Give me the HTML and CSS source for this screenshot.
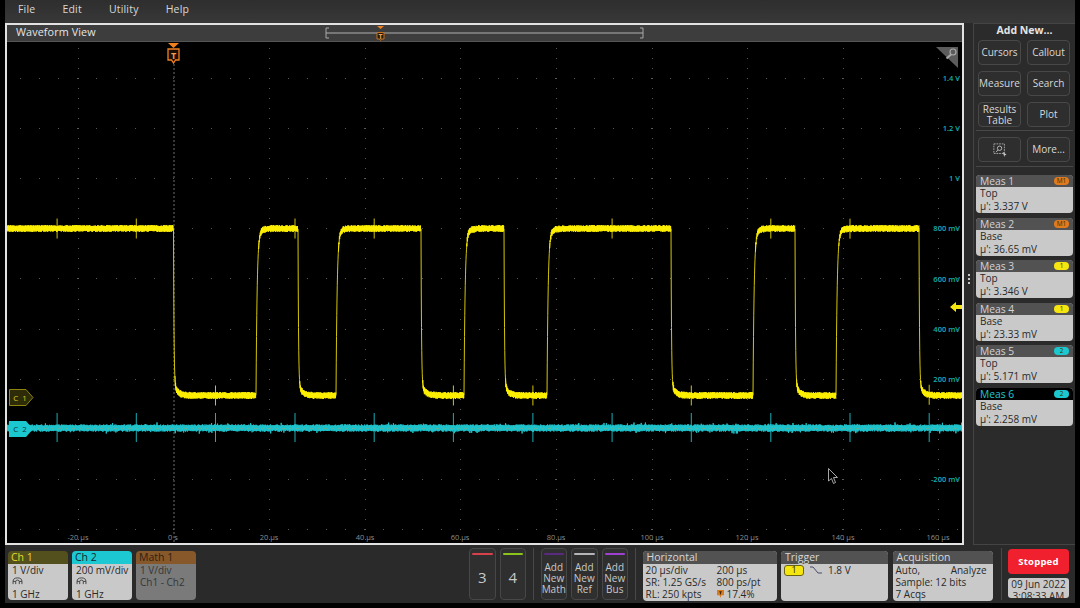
FILE: index.html
```html
<!DOCTYPE html>
<html lang="en">
<head>
<meta charset="utf-8">
<title>Waveform View</title>
<link rel="stylesheet" href="styles.css">
</head>
<body>
<div class="app">
  <nav class="menu"><span>File</span><span>Edit</span><span>Utility</span><span>Help</span></nav>
  <div class="main">
    <section class="view">
      <header class="view-head">
        <span class="view-title">Waveform View</span>
        <svg class="overview" viewBox="0 0 320 16">
          <path class="ov-br" d="M4 3H1V13H4M315 3H318V13H315"/>
          <path class="ov-line" d="M1 8H318"/>
          <path class="ov-tri" d="M52 1H59L55.500 4Z"/>
          <path class="ov-box" d="M52 7.500H59V14H56.500L55.500 15.500L54.500 14H52Z"/>
          <text class="ov-t" x="55.500" y="13.500">T</text>
        </svg>
      </header>
      <div class="plot">
        <svg class="plot-svg" id="plot" viewBox="7 42 955 501">
          <g id="grid"></g>
          <g class="v-labels">
            <text x="960" y="81">1.4 V</text><text x="960" y="131">1.2 V</text><text x="960" y="181">1 V</text>
            <text x="960" y="231">800 mV</text><text x="960" y="282">600 mV</text><text x="960" y="332">400 mV</text>
            <text x="960" y="382">200 mV</text><text x="960" y="482">-200 mV</text>
          </g>
          <g class="t-labels">
            <text x="78" y="540">-20 µs</text><text x="173" y="540">0 s</text><text x="269" y="540">20 µs</text>
            <text x="365" y="540">40 µs</text><text x="460" y="540">60 µs</text><text x="556" y="540">80 µs</text>
            <text x="652" y="540">100 µs</text><text x="747" y="540">120 µs</text><text x="843" y="540">140 µs</text>
            <text x="938" y="540">160 µs</text>
          </g>
          <path class="trig-line" d="M174 64V543"/>
          <path class="spike-c2" id="c2s"></path>
          <polyline class="trace-c2" id="c2"></polyline>
          <path class="c2-ref" d="M30 428.500H963"/>
          <path class="edge-c1" id="c1e"></path>
          <path class="spike-c1" id="c1s"></path>
          <path class="trace-c1" id="c1"></path>

          <path class="orange-fill" d="M168 43H179L173.500 48Z"/>
          <path class="t-box" d="M168 49H179V60H175.500L173.500 63L171.500 60H168Z"/>
          <text class="t-letter" x="173.500" y="58.500">T</text>

          <path class="c1-tag" d="M9.500 389.500H26L33 397.500L26 405.500H9.500Z"/>
          <text class="c1-text" x="20.500" y="400.500">C 1</text>
          <path class="c2-tag" d="M9 421H26L33 429L26 437H9Z"/>
          <text class="c2-text" x="20.500" y="432">C 2</text>

          <path class="level" d="M950 307L956 302V305H962V309H956V312Z"/>

          <path class="corner" d="M936 47H958V68Z"/>
          <circle class="corner-icon" cx="953" cy="52" r="3"/>
          <path class="corner-icon thick" d="M951 54.500L946.500 58.500"/>

          <path class="pointer" d="M828.500 468.500V481L831.500 478.500L833.500 483.500L835.500 482.500L833.500 477.500H837.500Z"/>
        </svg>
      </div>
    </section>
    <div class="grip"><i></i><i></i><i></i></div>
    <aside class="side">
      <div class="side-title">Add New...</div>
      <div class="side-grid">
        <button>Cursors</button><button>Callout</button>
        <button>Measure</button><button>Search</button>
        <button>Results<br>Table</button><button>Plot</button>
      </div>
      <div class="side-grid tools">
        <button aria-label="Zoom box">
          <svg class="zoom-ico" viewBox="0 0 16 16">
            <path class="zi-box" d="M1 1H13V12H1Z"/>
            <circle class="zi-s" cx="7.500" cy="6" r="2.500"/>
            <path class="zi-s" d="M5.500 8L3.500 10.500"/>
            <path class="zi-arrow" d="M11 10L15.500 13.500L13.500 14L13 16Z"/>
          </svg>
        </button>
        <button>More...</button>
      </div>
      <div class="meas-list">
        <div class="meas"><div class="meas-head"><span>Meas 1</span><b class="tag tag-m">M1</b></div><div class="meas-body">Top<br>µ': 3.337 V</div></div>
        <div class="meas"><div class="meas-head"><span>Meas 2</span><b class="tag tag-m">M1</b></div><div class="meas-body">Base<br>µ': 36.65 mV</div></div>
        <div class="meas"><div class="meas-head"><span>Meas 3</span><b class="tag tag-1">1</b></div><div class="meas-body">Top<br>µ': 3.346 V</div></div>
        <div class="meas"><div class="meas-head"><span>Meas 4</span><b class="tag tag-1">1</b></div><div class="meas-body">Base<br>µ': 23.33 mV</div></div>
        <div class="meas"><div class="meas-head"><span>Meas 5</span><b class="tag tag-2">2</b></div><div class="meas-body">Top<br>µ': 5.171 mV</div></div>
        <div class="meas active"><div class="meas-head"><span>Meas 6</span><b class="tag tag-2">2</b></div><div class="meas-body">Base<br>µ': 2.258 mV</div></div>
      </div>
    </aside>
  </div>
  <footer class="bar">
    <div class="chan ch1">
      <div class="chan-head">Ch 1</div>
      <div class="chan-body"><div>1 V/div</div>
        <svg class="probe" viewBox="0 0 12 9"><path d="M1 8V5Q1 1 6 1Q11 1 11 5V8M4 8V5Q4 3.500 6 3.500Q8 3.500 8 5V8M1 5H4M8 5H11"/></svg>
        <div class="chan-last">1 GHz</div></div>
    </div>
    <div class="chan ch2">
      <div class="chan-head">Ch 2</div>
      <div class="chan-body"><div>200 mV/div</div>
        <svg class="probe" viewBox="0 0 12 9"><path d="M1 8V5Q1 1 6 1Q11 1 11 5V8M4 8V5Q4 3.500 6 3.500Q8 3.500 8 5V8M1 5H4M8 5H11"/></svg>
        <div class="chan-last">1 GHz</div></div>
    </div>
    <div class="chan math">
      <div class="chan-head">Math 1</div>
      <div class="chan-body">1 V/div<br>Ch1 - Ch2</div>
    </div>

    <div class="slots">
      <button class="slot big s-red">3</button>
      <button class="slot big s-green">4</button>
      <span class="sep"></span>
      <button class="slot s-purple">Add<br>New<br>Math</button>
      <button class="slot s-grey">Add<br>New<br>Ref</button>
      <button class="slot s-violet">Add<br>New<br>Bus</button>
      <span class="sep"></span>
    </div>

    <div class="panel horizontal">
      <div class="panel-head">Horizontal</div>
      <div class="panel-body two">
        <span>20 µs/div</span><span>200 µs</span>
        <span>SR: 1.25 GS/s</span><span>800 ps/pt</span>
        <span>RL: 250 kpts</span><span class="pos"><svg class="mini-t" viewBox="0 0 8 9"><path d="M0 0H8V6H5L4 9L3 6H0Z"/><path class="mini-t-l" d="M2.500 2H5.500M4 2V5"/></svg>17.4%</span>
      </div>
    </div>
    <div class="panel trigger">
      <div class="panel-head">Trigger</div>
      <div class="panel-body trig-row">
        <b class="trig-src">1</b>
        <svg class="edge" viewBox="0 0 12 8"><path d="M0 1H3L8 7H12"/></svg>
        <span>1.8 V</span>
      </div>
    </div>
    <div class="panel acq">
      <div class="panel-head">Acquisition</div>
      <div class="panel-body">
        <div class="acq-row"><span>Auto,</span><span>Analyze</span></div>
        <div>Sample: 12 bits</div>
        <div>7 Acqs</div>
      </div>
    </div>
    <span class="sep end"></span>
    <div class="status">
      <button class="stopped">Stopped</button>
      <div class="clock">09 Jun 2022<br>3:08:33 AM</div>
    </div>
  </footer>
</div>
<script src="waveform.js"></script>
</body>
</html>
```
FILE: styles.css
```css
* { box-sizing: border-box; }
html, body { margin: 0; padding: 0; background: #000; }
body { font-family: "Open Sans", "Liberation Sans", sans-serif; font-size: 11px; color: #ddd; }
button { font-family: inherit; padding: 0; }

.app { width: 1070px; height: 603px; margin-left: 5px; background: #2a2a2a; display: flex; flex-direction: column; overflow: hidden; }

.menu { height: 23px; flex: none; display: flex; gap: 27px; padding: 0 0 5px 13px; align-items: center; background: linear-gradient(#2e2e2e, #383838); color: #d8d8d8; font-size: 10.500px; letter-spacing: .2px; }

.main { flex: none; height: 522px; display: flex; }

.view { width: 959px; flex: none; display: flex; flex-direction: column; border: 2px solid #e2e2e2; background: #000; }
.view-head { height: 17px; flex: none; display: grid; grid-template-columns: 318px 320px; align-items: start; background: #3d3d3d; border-bottom: 1px solid #555; }
.view-title { padding: 0 0 0 9px; font-size: 10.800px; line-height: 14px; color: #e4e4e4; letter-spacing: .1px; }
.overview { width: 320px; height: 16px; display: block; }
.ov-br { fill: none; stroke: #a8a8a8; stroke-width: 1; }
.ov-line { fill: none; stroke: #b0b0b0; stroke-width: 1; }
.ov-tri { fill: #f08020; }
.ov-box { fill: #2a1a08; stroke: #c8701c; stroke-width: 1; }
.ov-t { font-size: 7px; font-weight: 700; fill: #e8a060; text-anchor: middle; }

.plot { flex: 1; min-height: 0; background: #000; }
.plot-svg { display: block; width: 955px; height: 501px; }
.dot { fill: #5a5a5a; }
.v-labels text { font-size: 7.500px; fill: #14b0b4; text-anchor: end; font-weight: 600; }
.t-labels text { font-size: 7.500px; fill: #8a8f8f; text-anchor: middle; }
.trig-line { fill: none; stroke: #6e6e6e; stroke-width: 1; stroke-dasharray: 2 2; }
.trace-c1 { fill: none; stroke: #fff000; stroke-width: .9; stroke-linejoin: bevel; }
.edge-c1 { fill: none; stroke: #d4c608; stroke-width: 1; }
.spike-c1 { fill: none; stroke: #e8da08; stroke-width: .9; }
.trace-c2 { fill: none; stroke: #1fc4cc; stroke-width: 1; stroke-linejoin: bevel; }
.spike-c2 { fill: none; stroke: #17aeb6; stroke-width: 1; }
.c2-ref { fill: none; stroke: #b89a60; stroke-width: .6; stroke-dasharray: 3 4; opacity: .7; }
.orange-fill { fill: #f08020; }
.t-box { fill: #1a0f04; stroke: #f08020; stroke-width: 1.300; }
.t-letter { font-size: 9px; font-weight: 700; fill: #f0a050; text-anchor: middle; }
.c1-tag { fill: #2e2b08; stroke: #8e8410; stroke-width: 1; }
.c1-text { font-size: 8px; fill: #d8cc20; text-anchor: middle; letter-spacing: 1px; }
.c2-tag { fill: #1cc8d0; }
.c2-text { font-size: 8px; fill: #123038; text-anchor: middle; letter-spacing: 1px; }
.level { fill: #f5e610; }
.corner { fill: #5c5c5c; }
.corner-icon { fill: none; stroke: #a8a8a8; stroke-width: 1.200; }
.corner-icon.thick { stroke-width: 2; }
.pointer { fill: #000; stroke: #b8b8b8; stroke-width: .9; }

.grip { width: 9px; flex: none; display: flex; flex-direction: column; justify-content: center; align-items: flex-end; gap: 2px; padding: 0 3px 10px 0; background: #2a2a2a; }
.grip i { width: 2px; height: 2px; background: #c8c8c8; display: block; }

.side { width: 102px; flex: none; border: 1px solid #444; border-right: 0; background: #2b2b2b; display: flex; flex-direction: column; padding: 0 2px 0 2px; }
.side-title { height: 16px; flex: none; text-align: center; font-size: 10.500px; font-weight: 700; color: #e4e4e4; line-height: 12px; }
.side-grid { display: grid; flex: none; grid-template-columns: 43px 43px; column-gap: 6px; row-gap: 6px; padding: 0 2px 3px; border-bottom: 1px solid #484848; }
.side-grid button { height: 25px; background: #2e2e2e; border: 1px solid #484848; border-radius: 4px; color: #d8d8d8; font-size: 10px; line-height: 10.500px; display: flex; align-items: center; justify-content: center; text-align: center; }
.tools { padding-top: 6px; padding-bottom: 4px; }
.zoom-ico { width: 14px; height: 14px; display: block; }
.zi-box { fill: none; stroke: #b0b0b0; stroke-width: 1; stroke-dasharray: 2 1; }
.zi-s { fill: none; stroke: #c8c8c8; stroke-width: 1; }
.zi-arrow { fill: #c8c8c8; }

.meas-list { display: flex; flex-direction: column; gap: 5px; padding-top: 8px; }
.meas { height: 38px; flex: none; border-radius: 4px; overflow: hidden; background: #c9c9c9; width: 97px; }
.meas + .meas { margin-top: -.500px; }
.meas-head { height: 12px; background: #525252; color: #d4d4d4; display: flex; justify-content: space-between; align-items: center; padding: 0 4px; font-size: 10.300px; line-height: 12px; }
.meas.active .meas-head { background: #000; color: #1cc8d0; }
.meas-body { color: #2a2a2a; font-size: 10px; line-height: 13px; padding: 0 4px; }
.tag { width: 15px; height: 8px; border-radius: 4px; font-size: 6.500px; font-weight: 400; line-height: 8px; text-align: center; display: block; color: #3a2a08; }
.tag-m { background: #e07a1c; }
.tag-1 { background: #f5e610; }
.tag-2 { background: #1cc8d0; }

.bar { flex: 1; display: flex; align-items: flex-start; padding: 6px 0 0 3px; min-height: 0; }

.chan { width: 60px; height: 49px; border-radius: 4px; overflow: hidden; margin-right: 4px; flex: none; }
.chan-head { height: 12.500px; font-size: 10.500px; line-height: 12px; padding-left: 3px; }
.chan-body { height: 36.500px; background: #c9c9c9; color: #2a2a2a; font-size: 10px; line-height: 12.500px; padding: 0 3px 0 4px; white-space: nowrap; }
.chan-last { line-height: 11px; }
.ch1 .chan-head { background: #53501e; color: #e6da2c; }
.ch2 .chan-head { background: #1cc8d2; color: #12282c; }
.math .chan-head { background: #87582a; color: #2f2010; }
.math .chan-body { background: #7a7a7a; color: #363636; }
.probe { display: block; width: 11px; height: 8px; margin: 1px 0 4px; }
.probe path { fill: none; stroke: #3a3a3a; stroke-width: 1; }

.slots { display: flex; align-items: flex-start; margin-left: 269px; margin-top: -3px; flex: none; }
.slot { width: 26.500px; height: 52px; margin-right: 4px; flex: none; background: #2f2f2f; border: 1px solid #474747; border-radius: 4px; color: #c8c8c8; font-size: 10px; line-height: 10.700px; padding: 9px 0 0; position: relative; display: block; }
.slot::before { content: ""; position: absolute; left: 2px; right: 2px; top: 4px; height: 2px; border-radius: 1px; }
.slot.big { font-size: 15px; line-height: 20px; padding: 6px 0 0; }
.s-red::before { background: #d8404c; }
.s-green::before { background: #8cc41c; }
.s-purple::before { background: #5a2a80; }
.s-grey::before { background: #b4b4b8; }
.s-violet::before { background: #a040d0; }
.sep { width: 1px; height: 52px; background: #484848; margin: 0 6.500px 0 3px; flex: none; }

.panel { height: 49.500px; border-radius: 4px; overflow: hidden; background: #c9c9c9; flex: none; margin-right: 4px; }
.panel-head { height: 13px; background: #525252; color: #d8d8d8; font-size: 10.500px; line-height: 12.500px; padding-left: 4px; }
.panel-body { color: #2a2a2a; font-size: 10px; line-height: 12.160px; padding: 0 3px; }
.horizontal { width: 134px; margin-right: 4.500px; }
.two { display: grid; grid-template-columns: 71px 1fr; padding-left: 3px; }
.pos { display: flex; align-items: center; gap: 3px; }
.mini-t { width: 7px; height: 8px; display: block; }
.mini-t path { fill: #d87a20; }
.mini-t .mini-t-l { fill: none; stroke: #2a1a08; stroke-width: 1; }
.trigger { width: 106.500px; margin-right: 5px; }
.trig-row { display: flex; align-items: center; padding: 0 3px; }
.trig-src { width: 20px; height: 11px; background: #f5e610; border: 1px solid #6a6410; border-radius: 3px; font-size: 9px; font-weight: 400; line-height: 8px; text-align: center; display: block; }
.edge { width: 12px; height: 8px; margin: 0 6px 0 6px; display: block; }
.edge path { fill: none; stroke: #4a4a6a; stroke-width: 1; }
.acq { width: 100px; margin-right: 0; }
.acq-row { display: flex; justify-content: space-between; padding-right: 3px; }
.sep.end { margin: -3px 6.500px 0 8px; }
.status { width: 61px; flex: none; margin-top: -2px; }
.stopped { display: block; width: 61px; height: 25px; background: #f0202e; border: 0; border-radius: 4px; color: #fff; font-size: 9.500px; font-weight: 700; letter-spacing: .2px; }
.clock { margin-top: 4px; height: 20px; background: #c9c9c9; border-radius: 3px; overflow: hidden; color: #2a2a2a; font-size: 10px; line-height: 11.500px; text-align: center; padding-top: 1px; }
```
FILE: waveform.js
```js
(function () {
  var NS = "http://www.w3.org/2000/svg";
  var seed = 12345;
  function rnd() {
    seed = (seed * 1664525 + 1013904223) % 4294967296;
    return seed / 4294967296;
  }

  // Graticule: major divisions every 95.6 x 50.1 px, five ticks per division.
  var grid = document.getElementById("grid");
  function dot(x, y) {
    var r = document.createElementNS(NS, "rect");
    r.setAttribute("class", "dot");
    r.setAttribute("x", x);
    r.setAttribute("y", y);
    r.setAttribute("width", 1);
    r.setAttribute("height", 1);
    grid.appendChild(r);
  }
  var i, k;
  for (i = -1; i <= 9; i++) {
    var gx = Math.round(173.5 + 95.6 * i);
    if (i === 0) continue;
    for (k = 0; k < 50; k++) dot(gx, Math.round(48 + 10.02 * k));
  }
  for (i = 0; i < 10; i++) {
    var gy = Math.round(78 + 50.1 * i);
    for (k = 0; k < 50; k++) dot(Math.round(20 + 19.12 * k), gy);
  }

  var spikes = [];
  for (i = 0; i < 12; i++) spikes.push(57 + 79.3 * i);

  // Ch1: square wave with rounded settling.
  var edges = [[173.5, 0], [256, 1], [298, 0], [336, 1], [421, 0], [464, 1], [504, 0], [547, 1], [671, 0], [753, 1], [795, 0], [836, 1], [919, 0]];
  function c1State(x) {
    var state = 1, from = -1000, j;
    for (j = 0; j < edges.length; j++) {
      if (x >= edges[j][0]) { state = edges[j][1]; from = edges[j][0]; }
    }
    var d = x - from, y;
    if (state) y = 228.5 + 158 * Math.exp(-d / 1.1) + 9 * Math.exp(-d / 3.5);
    else y = 395.5 - 154 * Math.exp(-d / 0.5) - 13 * Math.exp(-d / 3.5);
    return { y: y, d: d, state: state };
  }
  function near(x, step) {
    for (var j = 0; j < spikes.length; j++) {
      if (Math.abs(x - spikes[j]) < step / 2 + 0.01) return true;
    }
    return false;
  }

  var band = "", edge = "", spike = "", pen = "M", flip = 1, step = 0.3, x;
  for (x = 7; x <= 963; x += step) {
    var s = c1State(x);
    flip = -flip;
    if (s.d < (s.state ? 2.4 : 1.4)) {
      pen = "M";
      continue;
    }
    band += pen + x.toFixed(1) + " " + (s.y + flip * (2 + rnd() * 1.5)).toFixed(1) + " ";
    pen = "L";
    if (near(x, step)) {
      spike += "M" + x.toFixed(1) + " " + (s.y - 10).toFixed(1) + "V" + (s.y + 10).toFixed(1);
    }
  }
  for (i = 0; i < edges.length; i++) {
    var ex = edges[i][0];
    edge += "M" + ex + " " + c1State(ex + 0.001).y.toFixed(1);
    for (k = 1; k <= 12; k++) {
      var p = ex + k * 0.25;
      edge += "L" + p.toFixed(2) + " " + c1State(p).y.toFixed(1);
    }
  }
  document.getElementById("c1").setAttribute("d", band);
  document.getElementById("c1e").setAttribute("d", edge);
  document.getElementById("c1s").setAttribute("d", spike);

  // Ch2: flat, noisy trace with coupled spikes.
  var pts = [], spikes2 = "";
  flip = 1;
  for (x = 7; x <= 962; x += step) {
    flip = -flip;
    var burst = rnd() > 0.97 ? 2 : 0;
    pts.push(x.toFixed(1) + "," + (428 + flip * (2 + rnd() * 1.6 + burst)).toFixed(1));
    if (near(x, step)) {
      spikes2 += "M" + x.toFixed(1) + " 413V442";
    }
  }
  document.getElementById("c2").setAttribute("points", pts.join(" "));
  document.getElementById("c2s").setAttribute("d", spikes2);
})();
```
